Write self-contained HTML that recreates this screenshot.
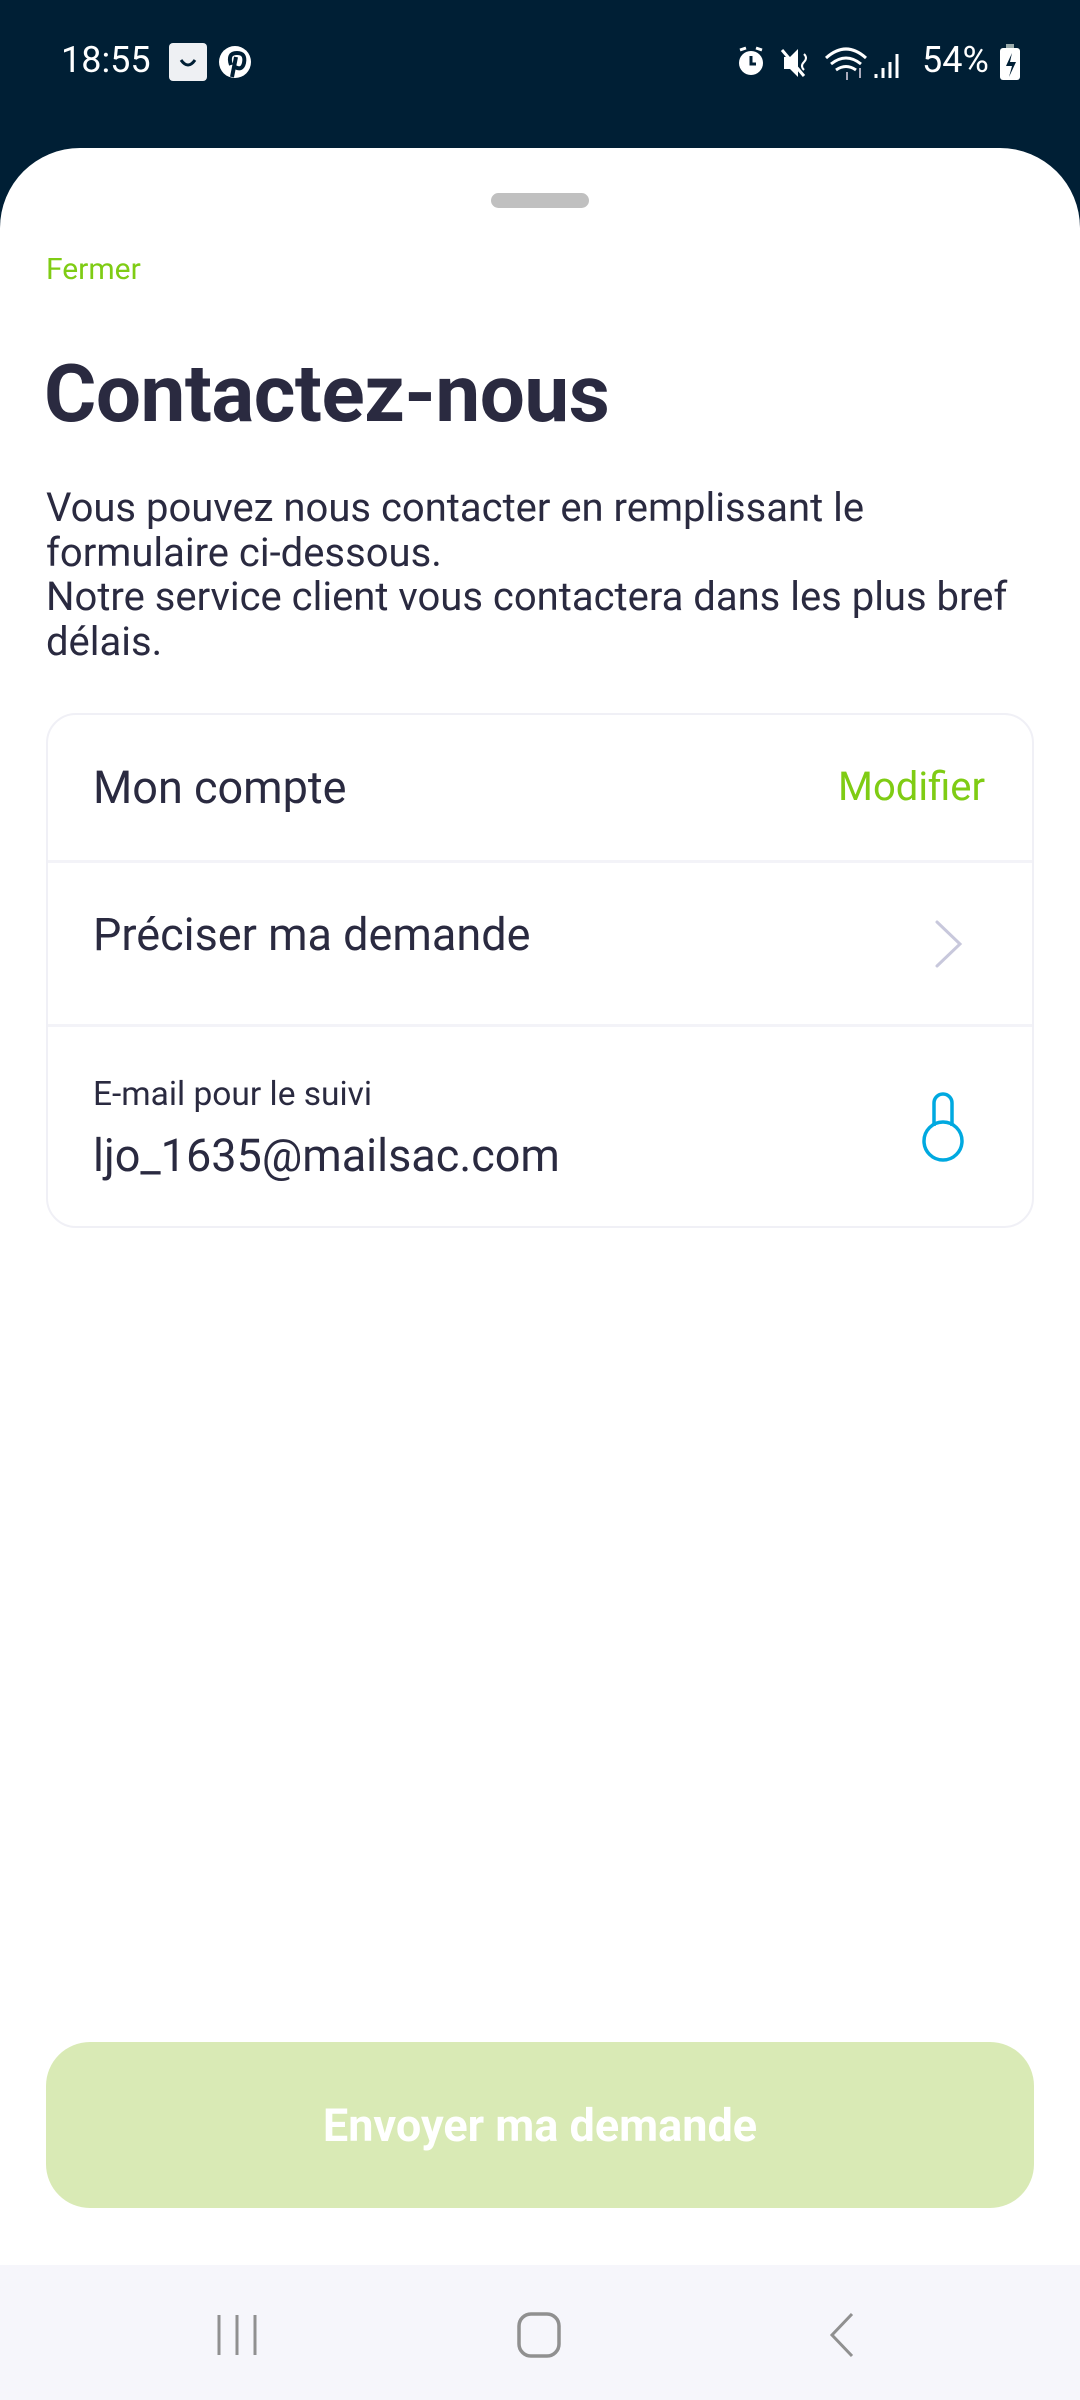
<!DOCTYPE html>
<html><head><meta charset="utf-8"><style>
*{margin:0;padding:0;box-sizing:border-box}
body{width:1080px;height:2400px;background:#001f35;font-family:"Roboto","Liberation Sans",sans-serif;position:relative;overflow:hidden;color:#2a2a40}
.abs{position:absolute}
.sheet{position:absolute;left:0;top:148px;width:1080px;height:2252px;background:#fff;border-radius:80px 80px 0 0}
.t{position:absolute;white-space:nowrap}
</style></head><body>
<div class="t" style="left:61px;top:38px;font-size:36px;color:#fff;line-height:44px">18:55</div>
<div class="abs" style="left:169px;top:43px;width:38px;height:38px;background:#eef0f3;border-radius:4px"></div>
<svg class="abs" style="left:169px;top:43px" width="38" height="38"><path d="M12 17 q7 10 14 0" stroke="#001f35" stroke-width="3" fill="none"/></svg>
<svg class="abs" style="left:218px;top:43px" width="34" height="38"><circle cx="17" cy="19" r="16" fill="#fff"/><path d="M14 34 L18 14 M13 22 q-4-12 6-12 q9 0 7 10 q-2 8-9 4" stroke="#001f35" stroke-width="4" fill="none"/></svg>
<svg class="abs" style="left:734px;top:44px" width="300" height="38">
<circle cx="17" cy="19" r="12" fill="#fff"/><path d="M6 6 l6-2 M28 6 l-6-2" stroke="#fff" stroke-width="3"/><path d="M17 12 v8 h5" stroke="#001f35" stroke-width="3" fill="none"/>
<path d="M50 13 h6 l8-8 v28 l-8-8 h-6z" fill="#fff"/><path d="M48 6 l22 26" stroke="#fff" stroke-width="3"/><path d="M70 10 q4 4 0 8 q-4 4 0 8" stroke="#fff" stroke-width="2" fill="none"/>
<path d="M92 14 q20-18 40 0 M97 20 q15-12 30 0 M102 26 q10-7 20 0" stroke="#fff" stroke-width="3" fill="none"/><path d="M113 28 v8 M126 24 v10" stroke="#aab" stroke-width="2"/>
<path d="M142 34 v-4 M149 34 v-10 M156 34 v-16 M163 34 v-24" stroke="#fff" stroke-width="3"/>
</svg>
<div class="t" style="left:922px;top:38px;font-size:36px;color:#fff;line-height:44px">54%</div>
<svg class="abs" style="left:999px;top:44px" width="22" height="36"><rect x="7" y="0" width="8" height="4" fill="#9aa"/><rect x="1" y="4" width="20" height="32" rx="3" fill="#fff"/><path d="M13 9 l-6 13 h6 l-3 11 l7-15 h-6z" fill="#001f35"/></svg>

<div class="sheet"></div>
<div class="abs" style="left:491px;top:193px;width:98px;height:15px;background:#c0c0c0;border-radius:8px"></div>
<div class="t" style="left:46px;top:252px;font-size:30px;color:#7fcc14">Fermer</div>
<div class="t" style="left:44px;top:347px;font-size:80px;font-weight:bold;color:#2a2a40;letter-spacing:-0.5px">Contactez-nous</div>
<div class="abs" style="left:46px;top:486px;font-size:40px;line-height:44.5px;color:#2a2a40;width:1034px">Vous pouvez nous contacter en remplissant le<br>formulaire ci-dessous.<br>Notre service client vous contactera dans les plus bref<br>délais.</div>

<div class="abs" style="left:46px;top:713px;width:988px;height:515px;border:2px solid #f0f0f6;border-radius:30px"></div>
<div class="abs" style="left:48px;top:860px;width:984px;height:3px;background:#f3f3f8"></div>
<div class="abs" style="left:48px;top:1024px;width:984px;height:3px;background:#f3f3f8"></div>
<div class="t" style="left:93px;top:761px;font-size:45px;color:#2a2a40">Mon compte</div>
<div class="t" style="right:95px;top:763px;font-size:40px;color:#7fcc14">Modifier</div>
<div class="t" style="left:93px;top:908px;font-size:45px;color:#2a2a40">Préciser ma demande</div>
<svg class="abs" style="left:932px;top:918px" width="34" height="52"><path d="M5 4 L28 26 L5 48" stroke="#c8c8dc" stroke-width="3" fill="none" stroke-linecap="round"/></svg>
<div class="t" style="left:93px;top:1075px;font-size:33.5px;color:#2a2a40">E-mail pour le suivi</div>
<div class="t" style="left:93px;top:1129px;font-size:45px;color:#2a2a40">ljo_1635@mailsac.com</div>
<svg class="abs" style="left:918px;top:1088px" width="50" height="80"><path d="M16 38 V15 a9 9 0 0 1 18 0 V38" stroke="#00a9e0" stroke-width="3.5" fill="none"/><circle cx="25" cy="53" r="19" stroke="#00a9e0" stroke-width="3.5" fill="none"/></svg>

<div class="abs" style="left:46px;top:2042px;width:988px;height:166px;background:#d9eab5;border-radius:44px"></div>
<div class="t" style="left:46px;top:2099px;width:988px;text-align:center;font-size:45px;font-weight:bold;color:#fff">Envoyer ma demande</div>

<div class="abs" style="left:0;top:2265px;width:1080px;height:135px;background:#f6f6fb"></div>
<svg class="abs" style="left:0;top:2300px" width="1080" height="70">
<path d="M219 15 v40 M237 15 v40 M255 15 v40" stroke="#909090" stroke-width="3"/>
<rect x="519" y="14" width="40" height="42" rx="12" stroke="#909090" stroke-width="3.5" fill="none"/>
<path d="M852 14 L832 35 L852 56" stroke="#909090" stroke-width="3" fill="none"/>
</svg>
</body></html>
